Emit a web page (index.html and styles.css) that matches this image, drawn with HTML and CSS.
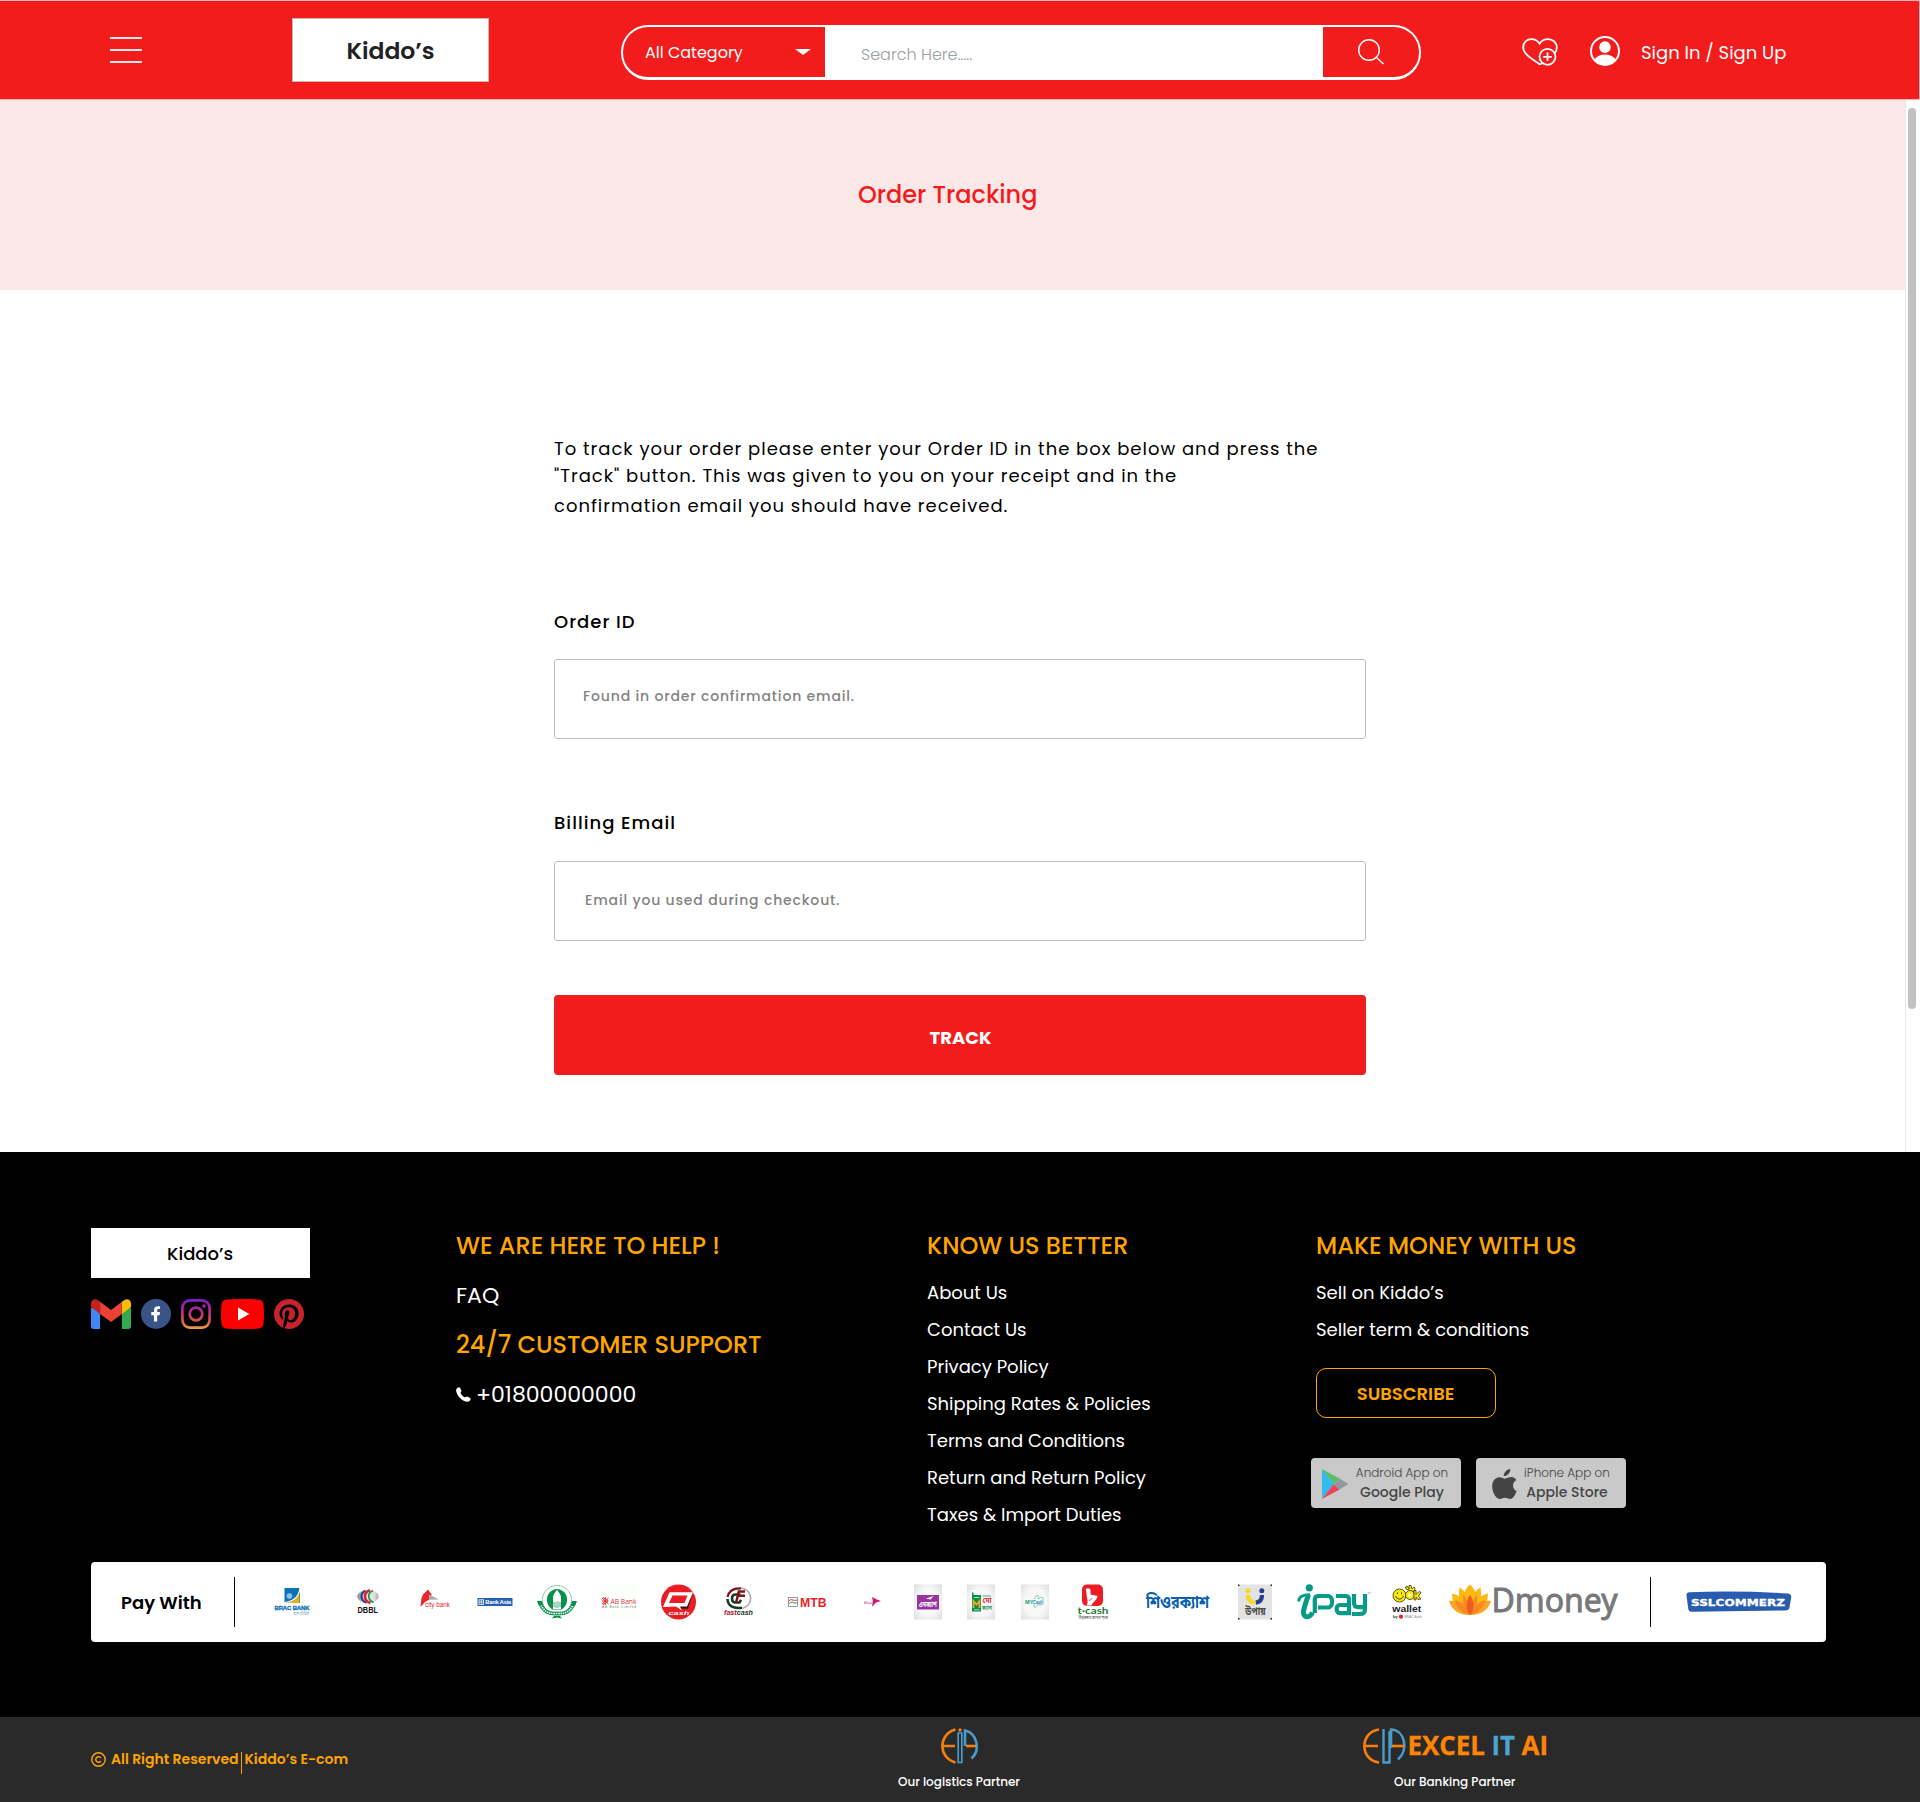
FILE: index.html
```html
<!DOCTYPE html>
<html lang="en">
<head>
<meta charset="utf-8">
<title>Order Tracking – Kiddo’s</title>
<link rel="stylesheet" href="styles.css">
</head>
<body>
<header class="header">
  <button class="menu" aria-label="Menu"><span></span><span></span><span></span></button>
  <a class="logo">Kiddo’s</a>
  <div class="search">
    <div class="search-cat"><span>All Category</span><i class="caret"></i></div>
    <div class="search-field">Search Here.....</div>
    <div class="search-btn">
      <svg width="28" height="28" viewBox="0 0 28 28" fill="none" stroke="#fff" stroke-width="1.4"><circle cx="12" cy="12" r="10.3"/><path d="M19.2 19.2 26.5 26"/></svg>
    </div>
  </div>
  <svg class="wish" width="36" height="28" viewBox="0 0 36 28" fill="none" stroke="#fff" stroke-width="1.8">
    <path d="M16.8 25.6C10.5 21 1.3 16.600 1.200 9.200C1.200 4.500 5 1.200 9.300 1.200C12.800 1.200 15.800 3 17.600 5.800C19.400 3 22.200 1.200 26 1.200C31 1.200 34.800 4.500 34.800 9.500C34.800 12 33.800 14.300 32.200 16"/>
    <path d="M16.500 25.500C17.500 26.400 18.800 26.300 20 25.400"/><circle cx="25.500" cy="18.800" r="8"/><path d="M25.500 14.500v8.600M21.200 18.800h8.600"/>
  </svg>
  <svg class="user" width="30" height="30" viewBox="0 0 30 30">
    <circle cx="15" cy="15" r="14" fill="none" stroke="#fff" stroke-width="2"/>
    <ellipse cx="15" cy="11.200" rx="5.700" ry="5.900" fill="#fff"/>
    <path d="M4.500 23.500C7 20.300 10.500 18.600 15 18.600S23 20.300 25.500 23.500C23 27.200 19.500 29 15 29S7 27.200 4.500 23.500Z" fill="#fff"/>
  </svg>
  <a class="sign">Sign In / Sign Up</a>
</header>

<div class="page">
  <main class="main">
    <section class="hero"><h1>Order Tracking</h1></section>
    <form class="track">
      <p class="intro">
        <span class="line">To track your order please enter your Order ID in the box below and press the</span>
        <span class="line">"Track" button. This was given to you on your receipt and in the</span>
        <span class="line line-last">confirmation email you should have received.</span>
      </p>
      <label class="label" for="oid">Order ID</label>
      <input class="input oid" id="oid" placeholder="Found in order confirmation email.">
      <label class="label label-email" for="mail">Billing Email</label>
      <input class="input mail" id="mail" placeholder="Email you used during checkout.">
      <button class="submit" type="button">TRACK</button>
    </form>
  </main>
  <div class="rail"><div class="thumb"></div></div>
</div>

<footer class="footer">
  <div class="cols">
    <div class="col brand">
      <div class="brand-box">Kiddo’s</div>
      <div class="social">
        <svg width="40" height="30" viewBox="0 0 40 30"><path d="M0 9h9.100v21H2.700A2.700 2.700 0 0 1 0 27.300Z" fill="#4285f4"/><path d="M30.900 9H40v18.300a2.700 2.700 0 0 1-2.700 2.700h-6.400Z" fill="#34a853"/><path d="M30.900 2.700V14.900L40 8V4.400C40 1 36.200-.9 33.500 1.100Z" fill="#fbbc04"/><path d="M9.100 14.900V2.700L20 10.900 30.900 2.700v12.200L20 23Z" fill="#ea4335"/><path d="M0 4.400V8l9.100 6.900V2.700L6.500 1.100C3.800-.9 0 1 0 4.400Z" fill="#c5221f"/></svg>
        <svg width="30" height="30" viewBox="0 0 30 30"><circle cx="15" cy="15" r="15" fill="#3b5488"/><path d="M13 22.500v-6.200h-2.700v-3.200H13v-1.900c0-2.700 1.500-4 3.800-4 1.100 0 2.200.2 2.200.2v2.500h-1.300c-1.200 0-1.500.7-1.500 1.500v1.700H19l-.4 3.200h-2.400v6.200Z" fill="#fff"/></svg>
        <svg width="30" height="30" viewBox="0 0 30 30" fill="none" stroke="url(#ig)" stroke-width="2.700"><defs><linearGradient id="ig" gradientUnits="userSpaceOnUse" x1="0" y1="0" x2="0" y2="30"><stop offset="0" stop-color="#7a1fd0"/><stop offset=".45" stop-color="#c02a86"/><stop offset=".75" stop-color="#dc5a4c"/><stop offset="1" stop-color="#eda63a"/></linearGradient></defs><rect x="1.400" y="1.400" width="27.200" height="27.200" rx="7.500"/><circle cx="15" cy="15" r="6.300"/><circle cx="23" cy="7" r="1.800" fill="#a024b0" stroke="none"/></svg>
        <svg width="43" height="30" viewBox="0 0 43 30"><path d="M5.500.6C12-.2 31-.2 37.500.6 40.500 1 42 2.500 42.400 5c.8 6 .8 14 0 20-.4 2.500-1.900 4-4.900 4.400-6.500.8-25.500.8-32 0C2.500 29 1 27.500.6 25c-.8-6-.8-14 0-20C1 2.500 2.500 1 5.500.6Z" fill="red"/><path d="M17 8.600v12.800L28.300 15Z" fill="#fff"/></svg>
        <svg width="30" height="30" viewBox="0 0 24 24"><path d="M12 0C5.400 0 0 5.400 0 12c0 5.100 3.200 9.400 7.600 11.200-.1-.9-.2-2.400 0-3.500.2-.9 1.400-6 1.400-6s-.4-.7-.4-1.800c0-1.700 1-2.900 2.200-2.900 1 0 1.500.8 1.500 1.700 0 1-.7 2.600-1 4-.3 1.200.6 2.200 1.800 2.200 2.100 0 3.800-2.200 3.800-5.500 0-2.900-2.100-4.900-5-4.900-3.400 0-5.400 2.600-5.400 5.200 0 1 .4 2.100.9 2.700.1.100.1.200.1.300-.1.400-.3 1.200-.3 1.400-.1.200-.2.300-.4.200-1.500-.7-2.400-2.900-2.400-4.600 0-3.800 2.800-7.300 7.900-7.300 4.200 0 7.400 3 7.400 6.900 0 4.100-2.600 7.500-6.200 7.500-1.200 0-2.400-.6-2.800-1.400l-.7 2.800c-.3 1-1 2.300-1.500 3.100 1.100.4 2.300.6 3.500.6 6.600 0 12-5.400 12-12S18.600 0 12 0Z" fill="#c8232c"/></svg>
      </div>
    </div>
    <div class="col help">
      <h2>WE ARE HERE TO HELP !</h2>
      <a class="big faq">FAQ</a>
      <h2>24/7 CUSTOMER SUPPORT</h2>
      <a class="big phone"><svg width="15" height="15" viewBox="0 0 15 15"><path d="M.8 1.600C1.500.8 2.600-.1 3.500.3 4.500 1.500 5 2.600 5.500 3.800 5.500 4.600 4.300 5.200 4.600 6.100 5.300 8 6.800 9.600 8.700 10.300 9.600 10.600 10.200 9.400 11 9.500 12.200 10 13.500 10.600 14.600 11.500 15 12.400 14 13.600 13.200 14.200 11.800 15 9.600 14.700 7.700 13.700 4.800 12 2.500 9.800 1.100 6.900.1 4.900-.3 2.900.8 1.600Z" fill="#fff"/></svg><span>+01800000000</span></a>
    </div>
    <div class="col know">
      <h2>KNOW US BETTER</h2>
      <ul class="links">
        <li>About Us</li><li>Contact Us</li><li>Privacy Policy</li><li>Shipping Rates &amp; Policies</li><li>Terms and Conditions</li><li>Return and Return Policy</li><li>Taxes &amp; Import Duties</li>
      </ul>
    </div>
    <div class="col money">
      <h2>MAKE MONEY WITH US</h2>
      <ul class="links"><li>Sell on Kiddo’s</li><li>Seller term &amp; conditions</li></ul>
      <button class="subscribe">SUBSCRIBE</button>
      <div class="stores">
        <div class="store">
          <svg width="27" height="30" viewBox="0 0 27 30"><path d="M0 0v30l12-15Z" fill="#32bbec"/><path d="M0 0l17.500 9.500L11.800 15Z" fill="#59bd6b"/><path d="M0 30l17.500-9.600L11.800 15Z" fill="#ef4358"/><path d="M17.500 9.500 26.500 15l-9 5.400L11.800 15Z" fill="#93999d"/></svg>
          <div class="store-text"><small>Android App on</small><b>Google Play</b></div>
        </div>
        <div class="store apple">
          <svg width="25" height="30" viewBox="0 0 25 30" fill="#444"><path d="M18.300 0c.3 3.600-3 7.300-6.500 7.100C11.500 3.800 14.700.3 18.300 0Z"/><path d="M24.600 22.200c-1.700 4.500-4 7.700-6.600 7.700-1.900 0-2.700-1.100-5-1.100-2.200 0-3.200 1.100-5 1.100C4.300 29.900.2 24 .2 17.200c0-5.500 3.300-9 7.200-9 2.400 0 4.200 1.500 5.600 1.500 1.500 0 3.600-1.600 6.300-1.600 1.700 0 3.700.8 5 2.900-4.700 2.800-4 9.300.3 11.200Z"/></svg>
          <div class="store-text"><small>iPhone App on</small><b>Apple Store</b></div>
        </div>
      </div>
    </div>
  </div>

  <div class="pay">
    <span class="pay-title">Pay With</span>
    <i class="rule"></i>
    <div class="logos">
      <svg width="40" height="36" viewBox="0 0 40 36"><path d="M12.500 4H28v15H12.500Z" fill="#0a72ba"/><path d="M27.500 4.500V19H13C22 18 27 12 27.500 4.500Z" fill="#e9ac25"/><path d="M28 4C27 12 22 17.500 12.500 18.500" fill="none" stroke="#fff" stroke-width="1.200"/><circle cx="17.500" cy="12" r="2.800" fill="#8fc3e6"/><text x="2.500" y="25.500" class="f-sans b" font-size="6" textLength="35" fill="#0870b8" stroke="#0870b8" stroke-width=".3">BRAC BANK</text><text x="21" y="30.500" class="f-bn" font-size="5" textLength="16" lengthAdjust="spacingAndGlyphs" fill="#6fa5c4">আস্থা অবিচল</text></svg>
      <svg width="24" height="36" viewBox="0 0 24 36"><defs><linearGradient id="db"><stop offset="0" stop-color="#888"/><stop offset=".4" stop-color="#eee"/><stop offset=".8" stop-color="#ddd"/><stop offset="1" stop-color="#aaa"/></linearGradient></defs><ellipse cx="12" cy="12.500" rx="10.700" ry="6.800" fill="url(#db)"/><path d="M9.500 6.800C4 9 4 16.500 10.500 18.800" fill="none" stroke="#2d3c98" stroke-width="2.200"/><path d="M14 6.200C7 8.500 7.500 17 14.500 19" fill="none" stroke="#dc202c" stroke-width="2.600"/><path d="M17 6.500C11 9 11.500 16 17.500 18.500" fill="none" stroke="#14964c" stroke-width="1.700"/><text x="1.500" y="28.700" class="f-sans b" font-size="8.500" textLength="20.500" lengthAdjust="spacingAndGlyphs" fill="#111">DBBL</text></svg>
      <svg width="36" height="36" viewBox="0 0 36 36"><path d="M6 10.500l5-5 4 5.500-3 1.500 2 2-6 3.500-4.500 5 1-9Z" fill="#e8262d"/><path d="M12 10.500l10 5-10 .2Z" fill="#aaa"/><text x="8" y="22.500" class="f-sans" font-size="7.500" textLength="25" lengthAdjust="spacingAndGlyphs" fill="#e8262d">city bank</text></svg>
      <svg width="36" height="36" viewBox="0 0 36 36"><rect x=".5" y="14" width="35" height="8" fill="#2560ae"/><rect x="2" y="15.800" width="4.600" height="4.500" fill="none" stroke="#fff" stroke-width=".8"/><path d="M2 18h4.600M4.300 15.800v4.500" stroke="#fff" stroke-width=".7"/><text x="8.200" y="20.300" class="f-sans b" font-size="6" textLength="26" fill="#fff">Bank Asia</text></svg>
      <svg width="40" height="36" viewBox="0 0 40 36"><circle cx="20" cy="16" r="14.500" fill="none" stroke="#23a35b" stroke-width=".9" stroke-dasharray="1.300 .7"/><path d="M15.500 25.500C7 21 8 6 20 5 32 6 33 21 24.500 25.500Z" fill="#06914a"/><path d="M16 25V12.500C17 9 19 7.500 20 5.800c1 1.700 3 3.200 4 6.700V25Z" fill="#fff"/><path d="M17 23v-5m2 6v-6m2 6v-7m2 6v-5" stroke="#4fae78" stroke-width="1"/><path d="M3 19C7 28 12 30 20 29.500 28 30 33 28 37 19" fill="none" stroke="#06914a" stroke-width="3.800"/><path d="M3.800 21C8 28.200 12 30 20 29.500 28 30 32 28.200 36.200 21" fill="none" stroke="#fff" stroke-width="1.600" stroke-dasharray="1.500 .8"/><path d="M0 17h5l1 4-4 1ZM40 17h-5l-1 4 4 1ZM15 34.500 17 32h6l2 2.500-5-1Z" fill="#06914a"/></svg>
      <svg width="36" height="36" viewBox="0 0 36 36"><path fill="#fcfefb" d="M0 0h36v36H0z"/><path d="M1 14l6.500 6M7.500 14 1 20M4.200 13v8M1 17h6.500M2 13.500l5 3M2 20.500l5-3" stroke="#e03038" stroke-width="1"/><text x="9.500" y="19.800" class="f-open" font-size="7.600" textLength="26" lengthAdjust="spacingAndGlyphs" fill="#e03038">AB Bank</text><text x="1" y="24.200" class="f-sans" font-size="3.200" textLength="34" fill="#777">AB Bank Limited</text></svg>
      <svg width="36" height="36" viewBox="0 0 36 36"><circle cx="17.500" cy="18" r="17.500" fill="#ec1c24"/><path d="M10 10h21.500L27 24.800H20Z" fill="#331515"/><path d="M2 23 8.500 8.200H32L26 22.500H19L21 26.500 15 22.500Z" fill="#fff"/><path d="M8 19 11.500 11.500H26.500L23.500 19Z" fill="#ec1c24"/><text x="7.500" y="31.300" class="f-sans b i" font-size="6" textLength="21" lengthAdjust="spacingAndGlyphs" fill="#fff">cash</text></svg>
      <svg width="32" height="36" viewBox="0 0 32 36" fill="none"><path d="M4.500 13C6 7 10 4 18 4.500" stroke="#7d1518" stroke-width="2.200"/><path d="M18 3.800c12 3 13 17 1.500 20.600" stroke="#aaa" stroke-width="1.700"/><path d="M4.500 15C5 22 10 25 19 23.800" stroke="#173b28" stroke-width="2.600"/><path d="M17.500 10.500H12C8 11 8 18 12 18.500h4.500l1.500-2.600" stroke="#173b28" stroke-width="2.600"/><path d="M22 7.500h-6.200L13 19M22 11.800h-7" stroke="#7d1518" stroke-width="2.500"/><text x="1" y="31" class="f-sans b i" font-size="7" textLength="29" lengthAdjust="spacingAndGlyphs" fill="#173b28"><tspan fill="#a3181d">fast</tspan>cash</text></svg>
      <svg width="40" height="36" viewBox="0 0 40 36"><rect x="1.500" y="13.500" width="9" height="9" fill="#fff" stroke="#888" stroke-width=".8"/><path d="M1.500 17.500C4.500 13.500 5 17.500 10.500 16" stroke="#e03038" fill="none"/><path d="M1.500 20.500C5.500 15.500 6.500 20.500 10.500 18.800" stroke="#479657" fill="none"/><text x="13" y="22.700" class="f-sans b" font-size="13" textLength="26.500" lengthAdjust="spacingAndGlyphs" fill="#e91f2c">MTB</text></svg>
      <svg width="18" height="36" viewBox="0 0 18 36"><path d="M8 13l5 2.500L17 17l-5 1.500L8 23l1-5.500Z" fill="#d4146c"/><text x="0" y="19.500" class="f-sans" font-size="4.200" textLength="9.500" lengthAdjust="spacingAndGlyphs" fill="#c32668">bKash</text></svg>
      <svg width="28" height="36" viewBox="0 0 28 36"><defs><radialGradient id="tile" r=".75"><stop offset=".5" stop-color="#f8f8f8"/><stop offset="1" stop-color="#d9d9d9"/></radialGradient></defs><path fill="url(#tile)" d="M0 .5h28v35H0z"/><rect x="3" y="11" width="22" height="14.500" fill="#9736a0"/><text x="5" y="22.500" class="f-bn b" font-size="8.500" textLength="17.500" lengthAdjust="spacingAndGlyphs" fill="#fff">এমক্যাশ</text><path d="M12 14.500 19.500 12l-3 3.500Z" fill="#fff"/></svg>
      <svg width="28" height="36" viewBox="0 0 28 36"><path fill="url(#tile)" d="M0 .5h28v35H0z"/><path d="M5 8.500h1.500V11H14v16.500H5Z" fill="#07904d"/><path d="M6.500 24v-7l3 3.500 3-3.500v7" fill="none" stroke="#f2a823" stroke-width="1.800"/><path d="M7 13.500h5.500M7 25.800h5.500" stroke="#d6edd9" stroke-width=".8"/><text x="15.500" y="19" class="f-bn b" font-size="7" textLength="9" lengthAdjust="spacingAndGlyphs" fill="#e4393f">মো</text><text x="15" y="26" class="f-bn b" font-size="6" textLength="10" lengthAdjust="spacingAndGlyphs" fill="#3d9b67">ক্যাশ</text><path d="M15.500 12h8.500" stroke="#51a877"/></svg>
      <svg width="28" height="36" viewBox="0 0 28 36"><path fill="url(#tile)" d="M0 .5h28v35H0z"/><path d="M13 15c3-5 5-5 4 0 4-3 6-2 5 2 1 4-2 5-5 3-2 4-4 5-4 0" fill="none" stroke="#70c49b" stroke-width=".9"/><text x="4" y="19.500" class="f-sans b" font-size="5.500" textLength="8.500" lengthAdjust="spacingAndGlyphs" fill="#169c69">MY</text><text x="12" y="20.200" class="f-sans b i" font-size="5" textLength="9.500" lengthAdjust="spacingAndGlyphs" fill="#2682bf">Cash</text></svg>
      <svg width="32" height="36" viewBox="0 0 32 36"><rect x="5" y=".5" width="21" height="21.500" rx="5" fill="#ed1c24"/><path d="M8.500 5.500C10 3.600 12.500 4 13.500 6v4.500L20.500 12C20 16.500 16 17.500 14.500 21.500H9.500C12 18 9.500 14 9.300 7Z" fill="#fff"/><path d="M12 17l3.500-3" stroke="#ed1c24" stroke-width=".8"/><text x=".5" y="29.700" class="f-lato b" font-size="10" textLength="31" lengthAdjust="spacingAndGlyphs" fill="#287a35">t·cash</text><text x="1.500" y="34.800" class="f-bn" font-size="4" textLength="29.500" lengthAdjust="spacingAndGlyphs" fill="#333">বিশ্বস্ততায় আমরা পাশে</text></svg>
      <svg width="64" height="36" viewBox="0 0 64 36"><text x="0" y="24" class="f-bn b" font-size="17" textLength="63" lengthAdjust="spacingAndGlyphs" fill="#0860b0">শিওরক্যাশ</text></svg>
      <svg width="34" height="36" viewBox="0 0 34 36"><path fill="#e3e3e3" d="M0 .5h34v35H0z"/><path d="M0 .5h1.500V2H0zM32.500.5H34V2h-1.500zM0 34h1.500v1.500H0zM32.500 34H34v1.500h-1.500z" fill="#222"/><circle cx="10" cy="6.800" r="2.500" fill="#f9d91a"/><circle cx="23.800" cy="6.800" r="2.500" fill="#233f8e"/><path d="M10 11c0 5.500 3 7.500 7 7.500" fill="none" stroke="#f9d91a" stroke-width="4.200"/><path d="M24 11c0 5-2.500 7.300-6.200 7.700" fill="none" stroke="#233f8e" stroke-width="4.200"/><text x="7" y="30.500" class="f-bn b" font-size="11.500" textLength="20.500" lengthAdjust="spacingAndGlyphs" fill="#4a4a4a">উপায়</text></svg>
      <svg width="74" height="36" viewBox="0 0 74 36" fill="none" stroke="#079a87" stroke-width="4.200"><circle cx="12.300" cy="3.800" r="3.600" fill="#079a87" stroke="none"/><path d="M1.800 17.500C1.800 12 6 10.800 13 10.800" stroke-width="3"/><path d="M11.500 10.500C9.500 17 7 23 6.500 27.500 6 34 12.500 34.500 15.500 28.500" stroke-width="5"/><path d="M17.800 29V15.500C17.800 13 19 12 21.500 12H31C36.500 12 36.500 23.500 31 23.500H21"/><path d="M39 12h9.500c2.500 0 3.500 1.200 3.500 3.500v13.700H43C38.500 29.200 38.500 21 43 21h9"/><path d="M57 10V18.500c0 3 1.200 4.700 4.500 4.700H68M68 10V25c0 3.800-1.500 5-5 5H55"/><path d="M70.500 9h3" stroke-width="1" stroke-opacity=".6"/></svg>
      <svg width="30" height="36" viewBox="0 0 30 36"><g fill="#fbea08" stroke="#4a4510" stroke-width=".9"><path d="M14 5 13.500 3 15 2 17 5 17 1.500 19 1.500 20 5 22 3 23 4.500 22 8Z"/><circle cx="7.500" cy="11.500" r="6.500"/><ellipse cx="18" cy="11" rx="4.500" ry="4.500"/><path d="M22 6.500l2 0v4l3-3 2 1-2.500 3.500 2.500 3-3 .5-2-2.500v3l-2-.2Z"/></g><circle cx="18" cy="11.200" r="1.600" fill="#fff"/><path d="M3.500 12c1.500 4 6.500 4 8 0M5.500 8.500v1.500M9.500 8.500v1.500" stroke="#333" fill="none"/><text x=".3" y="28.300" class="f-sans b" font-size="9.500" textLength="29" lengthAdjust="spacingAndGlyphs" fill="#222">wallet</text><text x="1" y="34" class="f-sans b" font-size="4" fill="#222">by</text><circle cx="9" cy="32.700" r="2.100" fill="#e81f2d"/><text x="12.500" y="34" class="f-sans" font-size="3.600" textLength="17" lengthAdjust="spacingAndGlyphs" fill="#777">BRAC Bank</text></svg>
      <svg width="170" height="36" viewBox="0 0 170 36"><g fill="#fcb813"><path d="M21 .5C25 4 27 8 27 14L21 31 15 14C15 8 17 4 21 .5Z"/><path d="M10.500 3.500C15 6 18 10 18 16L21 31C10 26 9 14 10.500 3.500ZM31.500 3.500C27 6 24 10 24 16L21 31C32 26 33 14 31.500 3.500Z"/><path d="M3 9.500C10 11 14 15 16 20l4 11C8 28 3 20 3 9.500ZM39 9.500C32 11 28 15 26 20L22 31C34 28 39 20 39 9.500Z"/></g><path d="M0 17C8 16 13 19 20.500 31 11 31 3 27 0 17ZM42 17C34 16 29 19 21.500 31 31 31 39 27 42 17Z" fill="#fba524"/><path d="M6 16C13 18 18 23 21 31 13 29 7 24 6 16ZM36 16C29 18 24 23 21 31 29 29 35 24 36 16ZM14 11C20 17 21 24 21 31 15 25 13 18 14 11ZM28 11C22 17 21 24 21 31 27 25 29 18 28 11Z" fill="#f77f24" opacity=".8"/><path d="M21 11C26 18 25 26 21 31 17 26 16 18 21 11Z" fill="#f15a22"/><text x="42.500" y="28" class="f-noto" font-size="33" textLength="126" lengthAdjust="spacingAndGlyphs" fill="#77787b" stroke="#77787b" stroke-width=".9">Dmoney</text></svg>
    </div>
    <i class="rule"></i>
    <svg class="ssl" width="106" height="22" viewBox="0 0 106 22"><path d="M3.500 1.200Q53-.5 101.500 2.500 105.500 2.800 105.200 6.500L103.500 16.500Q103 19.500 99 19.500L6 20.700Q2.700 20.800 2.200 17.500L.5 4.500Q.3 1.300 3.500 1.200Z" fill="#285caf"/><text x="5" y="14.500" class="f-deja" font-size="13.500" textLength="94" lengthAdjust="spacingAndGlyphs" fill="#fff" stroke="#fff" stroke-width=".3">sslcommerz</text></svg>
  </div>
</footer>

<div class="bottom">
  <div class="copy">
    <svg width="15" height="15" viewBox="0 0 15 15" fill="none" stroke="#ffa500" stroke-width="1.400"><circle cx="7.500" cy="7.500" r="6.700"/><path d="M9.800 9.200A2.800 2.800 0 1 1 9.800 5.800"/></svg>
    <span class="rights">All Right Reserved</span><i></i><span>Kiddo’s E-com</span>
  </div>
  <div class="partner logistics">
    <svg width="37" height="36" viewBox="0 0 37 36" fill="none"><path d="M14.500 1.500C-3 6-3 30 14.500 34.500M1.500 18H14" stroke="#f57f17" stroke-width="2.600"/><path d="M17.200 5v29.500h3.600V5Z" stroke="#4a9cc9" stroke-width="1.700"/><circle cx="19" cy="2" r="1.700" fill="#f57f17"/><path d="M24 18V2.500C36 5 40 22 30.500 30.500" stroke="#4a9cc9" stroke-width="2.600"/><path d="M25 18h10" stroke="#f57f17" stroke-width="2.600"/></svg>
    <span>Our logistics Partner</span>
  </div>
  <div class="partner banking">
    <svg width="184" height="36" viewBox="0 0 184 36" fill="none"><path d="M16 1.500C-3.500 4-3.500 32 16 34.500M1.500 18H15" stroke="#f9800f" stroke-width="2.600"/><path d="M20.500 1v33.500h6V3" stroke="#4a9cc9" stroke-width="2.400"/><path d="M28 20V1.500C42 2 46 22 35 31.500" stroke="#4a9cc9" stroke-width="2.600"/><path d="M29 18h12" stroke="#f9800f" stroke-width="2.600"/><text y="27" class="f-open b" font-size="27" fill="#ff8508" stroke="#ff8508" stroke-width=".3"><tspan x="44.500" textLength="77.500" lengthAdjust="spacingAndGlyphs">EXCEL</tspan><tspan x="128.500" textLength="23.500" lengthAdjust="spacingAndGlyphs" fill="#4fa3cf" stroke="#4fa3cf">IT</tspan><tspan x="158.500" textLength="26.500" lengthAdjust="spacingAndGlyphs">AI</tspan></text></svg>
    <span>Our Banking Partner</span>
  </div>
</div>
</body>
</html>
```
FILE: styles.css
```css
* { box-sizing: border-box; }
body { margin: 0; width: 1920px; background: #fff; color: #000; font-family: Poppins, Inter, sans-serif; font-size: 18px; }
h1, h2, p, ul { margin: 0; padding: 0; }
button { font-family: inherit; }
svg { display: block; flex: none; overflow: visible; }

/* header */
.header { display: flex; align-items: flex-start; height: 100px; padding-left: 110px; background: #f21c1c; border: 1px solid #fbb3c0; border-left: 0; }
.menu { display: flex; flex-direction: column; gap: 10px; width: 32px; margin-top: 36px; padding: 0; border: 0; background: none; }
.menu span { height: 2px; background: #ffe5e5; }
.logo { display: flex; justify-content: center; align-items: center; width: 197px; height: 64px; margin: 17px 0 0 150px; padding-top: 1px; border: 1px solid #c2b9b9; background: #fff; color: #222; font-weight: 600; font-size: 23.5px; }
.search { display: flex; width: 800px; height: 55px; margin: 24px 0 0 132px; border: 2px solid #fff; border-bottom-width: 3px; border-radius: 27px; background: #fff; overflow: hidden; }
.search-cat { display: flex; justify-content: space-between; align-items: center; width: 202px; padding: 0 14px 0 22px; background: #f21c1c; color: #fff; font-size: 16px; }
.caret { border: 8px solid transparent; border-top: 6px solid #fff; border-bottom: 0; }
.search-field { flex: 1; padding: 1px 0 0 36px; color: #9aa0a3; font-weight: 300; font-size: 16px; line-height: 54px; }
.search-btn { width: 96px; padding: 11px 0 0 34px; background: #f21c1c; }
.wish { margin: 37px 0 0 101px; }
.user { margin: 35px 0 0 32px; }
.sign { margin: 38px 0 0 21px; color: #fff; line-height: 28px; white-space: nowrap; }

/* content */
.page { display: flex; height: 1052px; }
.main { width: 1905px; }
.hero { height: 190px; padding: 81px 0 0 858px; background: #fde8e8; }
.hero h1 { color: #f21c1c; font-weight: 500; font-size: 24px; line-height: 28px; }
.rail { width: 15px; padding: 8px 0 0 2px; border-left: 1px solid #e8e8e8; }
.thumb { width: 8px; height: 901px; border-radius: 4px; background: #c1c1c1; }
.track { display: flex; flex-direction: column; width: 812px; margin: 145px 0 0 554px; }
.line { display: block; line-height: 27px; letter-spacing: .99px; white-space: nowrap; }
.line-last { line-height: 33px; }
.label { margin: 86px 0 23px; font-weight: 500; line-height: 28px; letter-spacing: 1.02px; }
.label-email { margin: 70px 0 24px; }
.input { height: 80px; border: 1px solid #bdbdbd; border-radius: 3px; outline: 0; font: 500 14px Poppins, Inter, sans-serif; letter-spacing: .84px; }
.input::placeholder { color: #828282; opacity: 1; }
.oid { padding: 0 28px 6px; }
.mail { padding: 0 30px 1px; }
.submit { height: 80px; margin-top: 54px; padding: 5px 0 0 1px; border: 0; border-radius: 4px; background: #f21c1c; color: #fff; font-weight: 700; font-size: 18px; }

/* footer */
.footer { height: 565px; padding: 76px 91px 0; background: #000; color: #fff; }
.cols { display: flex; height: 334px; }
.brand { width: 365px; }
.brand-box { width: 219px; height: 50px; background: #fff; color: #000; font-weight: 500; line-height: 51px; text-align: center; padding-right: 1px; }
.social { display: flex; gap: 10px; margin-top: 21px; }
.help { width: 471px; }
.know { width: 389px; }
h2 { color: #ffa500; font-weight: 500; font-size: 24px; line-height: 35px; white-space: nowrap; }
.big { display: block; font-size: 22px; line-height: 36px; }
.faq { margin: 15px 0 13px; }
.phone { display: flex; align-items: center; gap: 5px; margin-top: 15px; }
.phone svg { margin-bottom: 2px; }
.links { display: grid; grid-auto-rows: 37px; margin-top: 11px; list-style: none; line-height: 37px; white-space: nowrap; }
.subscribe { display: block; width: 180px; height: 50px; margin-top: 20px; padding: 0 1px 0 0; border: 1px solid #ffa500; border-radius: 10px; background: none; color: #ffa500; font-weight: 600; font-size: 18px; }
.stores { display: flex; gap: 15px; margin: 40px 0 0 -5px; }
.store { display: flex; width: 150px; height: 50px; padding: 11px 0 0 11px; gap: 7px; border-radius: 4px; background: #c9c9c9; color: #444; }
.apple { padding-left: 16px; gap: 4px; }
.store-text { display: flex; flex-direction: column; width: 92px; margin-top: -6px; align-items: center; white-space: nowrap; }
.store-text small { font-weight: 300; font-size: 12px; line-height: 20px; }
.store-text b { font-weight: 500; font-size: 14px; line-height: 19px; }

/* payment strip */
.pay { display: flex; align-items: center; width: 1735px; height: 80px; border-radius: 4px; background: #fff; color: #000; }
.pay-title { width: 143px; padding: 1px 0 0 30px; font-weight: 600; white-space: nowrap; }
.rule { width: 1px; height: 50px; background: #000; }
.logos { display: grid; grid-template-columns: 84px 61px 60px 60px 64px 60px 62px 64px 77px 50px 53px 54px 56px 69px 92px 59px 95px 57px 170px; margin: 0 31px 0 37px; }
.ssl { margin-left: 35px; }
.f-sans { font-family: "Liberation Sans", sans-serif; }
.f-open { font-family: "Open Sans", sans-serif; }
.f-noto { font-family: "Noto Sans", sans-serif; }
.f-lato { font-family: Lato, sans-serif; }
.f-deja { font-family: "DejaVu Sans", sans-serif; font-weight: 700; font-variant: all-small-caps; }
.f-bn { font-family: "Noto Sans Bengali", sans-serif; }
.b { font-weight: 700; }
.i { font-style: italic; }

/* bottom bar */
.bottom { display: flex; height: 85px; padding-left: 91px; background: #2a2a2a; color: #fff; }
.copy { display: flex; width: 807px; padding-top: 35px; color: #ffa500; font-weight: 600; font-size: 14px; line-height: 15px; white-space: nowrap; }
.copy i { width: 1px; height: 22px; margin: 0 3px 0 2px; background: #ffa500; }
.rights { margin-left: 5px; }
.partner { display: flex; flex-direction: column; font-weight: 500; font-size: 12px; line-height: 20px; white-space: nowrap; padding-top: 11px; }
.partner span { margin-top: 8px; }
.logistics { width: 465px; }
.logistics svg { margin-left: 43px; }
.banking span { margin-left: 31px; }
```
